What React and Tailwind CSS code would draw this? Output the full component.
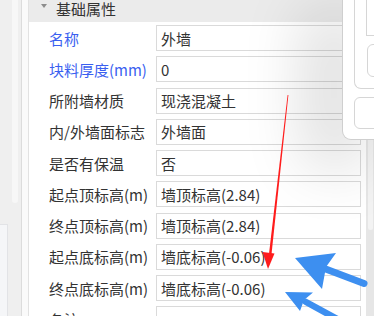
import React from "react";

const rows = [
  { label: "名称", value: "外墙", blue: true },
  { label: "块料厚度(mm)", value: "0", blue: true },
  { label: "所附墙材质", value: "现浇混凝土" },
  { label: "内/外墙面标志", value: "外墙面" },
  { label: "是否有保温", value: "否" },
  { label: "起点顶标高(m)", value: "墙顶标高(2.84)" },
  { label: "终点顶标高(m)", value: "墙顶标高(2.84)" },
  { label: "起点底标高(m)", value: "墙底标高(-0.06)" },
  { label: "终点底标高(m)", value: "墙底标高(-0.06)" },
  { label: "备注", value: "" },
];

export default function App() {
  return (
    <div className="relative w-[374px] h-[316px] overflow-hidden flex bg-white font-['Noto_Sans_CJK_SC','Noto_Sans',sans-serif] text-[15px] text-[#333]">
      {/* left tree panel */}
      <div className="w-[21px] shrink-0 bg-[#efefef] flex flex-col items-start">
        <div className="ml-[12px] w-[6px] h-[203px] bg-[#f7f7f7] rounded-b-[3px]" />
        <div className="mt-[21px] w-[8px] flex-1 bg-[#f5f6f8] border-t border-r border-[#e2e3e6]" />
      </div>
      <div className="w-px shrink-0 bg-[#dcdcdc]" />
      <div className="w-[6px] shrink-0 bg-[#fafafa]" />
      <div className="w-px shrink-0 bg-[#e2e2e2]" />

      {/* main */}
      <div className="flex-1 flex flex-col min-w-0">
        <div className="h-[22px] shrink-0 bg-[#ebebeb] flex items-start">
          <svg className="ml-[12px] mt-[4px]" width="6" height="4" viewBox="0 0 6 4">
            <polygon points="0,0 6,0 3,4" fill="#8c8c8c" />
          </svg>
          <span className="ml-[9px] leading-[17px] text-[#333]">基础属性</span>
        </div>
        <div className="flex-1 flex">
          <div className="flex-1 flex flex-col">
            {rows.map((r) => (
              <div key={r.label} className="h-[31.25px] shrink-0 flex items-start pt-[3px]">
                <div
                  className={
                    "w-[127px] h-[26px] pl-[20px] flex items-center whitespace-nowrap leading-none " +
                    (r.blue ? "text-[#3a5ff0]" : "text-[#333]")
                  }
                >
                  {r.label}
                </div>
                <div className="w-[205px] h-[26px] border border-[#dadada] bg-white pl-[4px] flex items-center whitespace-nowrap leading-none text-[#333]">
                  {r.value}
                </div>
              </div>
            ))}
          </div>
          <div className="w-[8px] shrink-0 bg-[#e6e6e6] flex justify-center">
            <div className="w-[5px] h-[208px] bg-[#f3f3f3] rounded-b-[3px]" />
          </div>
        </div>
      </div>

      {/* overlay dialog on the right */}
      <div className="absolute left-[342px] top-0 w-[44px] h-[140px] bg-white border border-t-0 border-[#cfcfcf] rounded-bl-[9px] shadow-[-30px_20px_60px_10px_rgba(0,0,0,0.13)] pl-[11px] flex flex-col">
        <div className="h-[89px] border-l border-b border-[#d6d6d6] rounded-bl-[7px] pl-[11px] flex flex-col">
          <div className="h-[36px] border-l border-b border-[#d6d6d6]" />
          <div className="mt-[8px] ml-px h-[33px] border border-[#d6d6d6] rounded-l-[6px]" />
        </div>
        <div className="mt-[8px] h-[32px] border border-[#d6d6d6] rounded-l-[6px]" />
      </div>

      {/* annotation arrows */}
      <svg className="absolute inset-0 pointer-events-none" width="374" height="316" viewBox="0 0 374 316">
        <polygon points="287.6,95 288.4,95 271,259 268.4,259" fill="#ff1c1c" />
        <polygon points="268,269 262.5,252 274.5,253.5" fill="#ff1c1c" />
        <line x1="364" y1="283.5" x2="323" y2="268" stroke="#3d8ff0" strokeWidth="7" strokeLinecap="round" />
        <polygon points="295,258 336,253 326,267 322,289" fill="#3d8ff0" />
        <line x1="306" y1="302" x2="350" y2="326" stroke="#3d8ff0" strokeWidth="6.5" strokeLinecap="round" />
        <polygon points="285,292 313,292.5 304,300 300,311" fill="#3d8ff0" />
      </svg>
    </div>
  );
}
